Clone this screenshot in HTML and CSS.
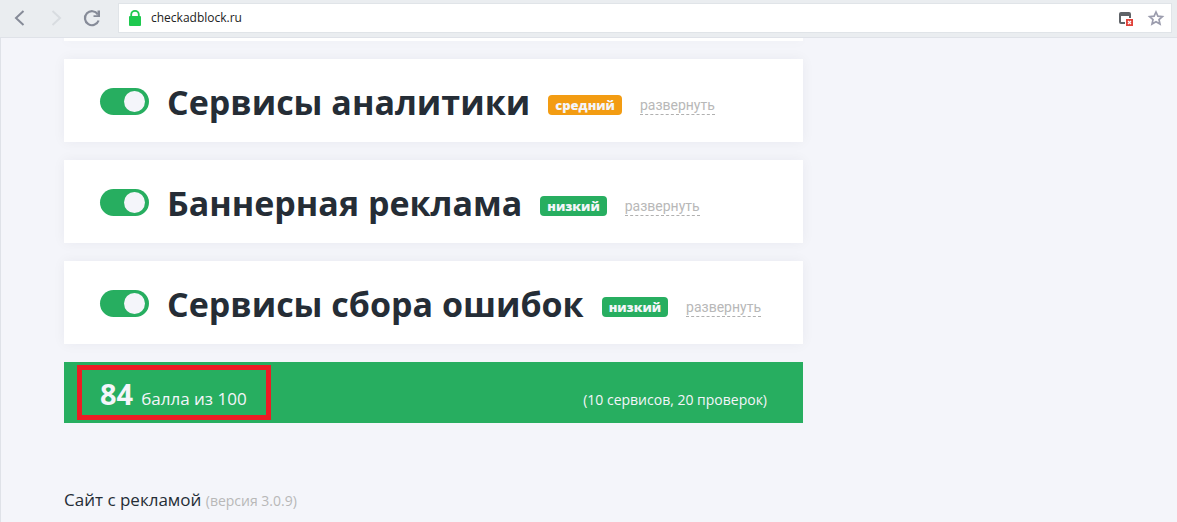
FILE: index.html
```html
<!DOCTYPE html>
<html lang="ru">
<head>
<meta charset="utf-8">
<meta name="viewport" content="width=device-width, initial-scale=1">
<title>checkadblock.ru</title>
<link rel="stylesheet" href="styles.css">
</head>
<body>
<header class="toolbar">
  <nav class="nav">
    <button class="icon-btn" type="button" aria-label="Назад">
      <svg width="20" height="20" viewBox="0 0 20 20"><path d="M13.500 3 6 10l7.500 7" fill="none" stroke="#868b98" stroke-width="2"/></svg>
    </button>
    <button class="icon-btn" type="button" aria-label="Вперёд" disabled>
      <svg width="20" height="20" viewBox="0 0 20 20"><path d="M6.500 3 14 10l-7.500 7" fill="none" stroke="#d8dce0" stroke-width="2"/></svg>
    </button>
    <button class="icon-btn" type="button" aria-label="Обновить">
      <svg width="20" height="20" viewBox="0 0 20 20"><path d="M15.800 6.300A7 7 0 1 0 16.600 12.500" fill="none" stroke="#868b98" stroke-width="2.200"/><path d="M18 2.500V9h-6.500V7.200h4V2.500z" fill="#868b98"/></svg>
    </button>
  </nav>
  <div class="address">
    <svg class="lock" width="14" height="18" viewBox="0 0 14 18"><path d="M3.200 8V5.600a3.800 3.800 0 0 1 7.600 0V8" fill="none" stroke="#1ec94f" stroke-width="1.800"/><rect x="1" y="7" width="12" height="10" rx="1" fill="#1ec94f"/></svg>
    <input class="url" type="text" value="checkadblock.ru" aria-label="Адрес">
    <div class="actions">
      <button class="icon-btn" type="button" aria-label="Окна заблокированы">
        <svg width="20" height="20" viewBox="0 0 20 20"><path d="M10 16H6a2 2 0 0 1-2-2V6a2 2 0 0 1 2-2h8a2 2 0 0 1 2 2v4h-2V8H6v6h4z" fill="#5f6368"/><rect x="11" y="11" width="7" height="7" fill="#e0433b"/><path d="m13 13 3 3m0-3-3 3" stroke="#fff" stroke-width="1.200"/></svg>
      </button>
      <button class="icon-btn" type="button" aria-label="В закладки">
        <svg width="20" height="20" viewBox="0 0 20 20"><path d="m10 4 1.900 4.100 4.500.5-3.400 3 1 4.500-4-2.300-4 2.300 1-4.500-3.400-3 4.500-.5z" fill="none" stroke="#9b9cad" stroke-width="1.700"/></svg>
      </button>
    </div>
  </div>
</header>
<main class="page">
  <div class="column">
    <div class="card card-tail"></div>
    <section class="card">
      <input class="switch" type="checkbox" id="s1" checked>
      <h2 class="title"><label for="s1">Сервисы аналитики</label></h2>
      <span class="badge badge-mid">средний</span>
      <a class="more" href="#analytics">развернуть</a>
    </section>
    <section class="card">
      <input class="switch" type="checkbox" id="s2" checked>
      <h2 class="title"><label for="s2">Баннерная реклама</label></h2>
      <span class="badge">низкий</span>
      <a class="more" href="#banners">развернуть</a>
    </section>
    <section class="card">
      <input class="switch" type="checkbox" id="s3" checked>
      <h2 class="title"><label for="s3">Сервисы сбора ошибок</label></h2>
      <span class="badge">низкий</span>
      <a class="more" href="#errors">развернуть</a>
    </section>
    <section class="score">
      <p class="points"><strong class="number">84</strong><span>балла из 100</span></p>
      <p class="checks">(10 сервисов, 20 проверок)</p>
    </section>
    <footer class="footer">Сайт с рекламой <span class="version">(версия 3.0.9)</span></footer>
  </div>
</main>
</body>
</html>
```
FILE: styles.css
```css
* { box-sizing: border-box; }

body {
  margin: 0;
  height: 100vh;
  display: flex;
  flex-direction: column;
  overflow: hidden;
  background: #f4f5fa;
  color: #252d36;
  font-family: "Segoe UI", "Open Sans", sans-serif;
}

.toolbar {
  display: flex;
  align-items: center;
  gap: 16px;
  padding: 3px 5px 4px 10px;
  background: #eaedf0;
  border-bottom: 1px solid #dfe2e8;
}

.nav { display: flex; gap: 16px; }

.icon-btn {
  display: flex;
  padding: 0;
  border: 0;
  background: none;
}

.address {
  flex: 1;
  display: flex;
  align-items: center;
  height: 30px;
  padding: 0 5px 0 9px;
  gap: 9px;
  background: #fff;
  border: 1px solid #e0e4e8;
}

.actions { display: flex; gap: 11px; }

.url {
  flex: 1;
  min-width: 0;
  padding: 0;
  border: 0;
  outline: 0;
  background: none;
  color: #222;
  font: 12px/20px "Segoe UI", "Open Sans", sans-serif;
}

.lock { flex: none; }

.page {
  flex: 1;
  min-height: 0;
  overflow: hidden;
  padding: 0 64px 0 63px;
  border-left: 1px solid #dfe2e8;
}

.column {
  display: flex;
  flex-direction: column;
  gap: 18px;
  max-width: 739px;
}

.card {
  display: flex;
  align-items: flex-end;
  padding: 17px 36px 15px;
  background: #fff;
  box-shadow: 0 0 12px rgba(37, 45, 54, 0.05);
}

.card-tail { padding: 3px 0 0; }

.switch {
  appearance: none;
  flex: none;
  align-self: center;
  width: 49px;
  height: 27px;
  margin: 0 18px 0 0;
  padding: 3px 4px 3px 3px;
  border-radius: 14px;
  background: #bbb;
}

.switch::before {
  content: "";
  display: block;
  width: 21px;
  height: 21px;
  border-radius: 50%;
  background: #f4f5fa;
}

.switch:checked { background: #27ae60; }
.switch:checked::before { margin-left: auto; }

.title {
  margin: 0 18px 0 0;
  padding-top: 2px;
  font-size: 34px;
  line-height: 49px;
  font-weight: 700;
  white-space: nowrap;
}

.badge {
  margin: 0 18px 12px 0;
  padding: 0 7px;
  border-radius: 4px;
  background: #27ae60;
  color: #f4f5fa;
  font-size: 13px;
  line-height: 20px;
  font-weight: 800;
}

.badge-mid { background: #f39c12; }

.more {
  margin-bottom: 12px;
  color: #b8b8b8;
  border-bottom: 1px dashed #b0b0b0;
  font: 14px/18px Roboto, sans-serif;
  text-decoration: none;
}

.score {
  display: flex;
  align-items: baseline;
  justify-content: space-between;
  padding: 11px 36px 9px;
  background: #27ae60;
  color: #f4f5fa;
}

.points, .checks { margin: 0; }

.points {
  position: relative;
  display: flex;
  align-items: baseline;
  gap: 8px;
  font-size: 17px;
  line-height: 20px;
}

/* Red frame drawn over the score */
.points::after {
  content: "";
  position: absolute;
  inset: -8px -24px -6px -23px;
  border: 5px solid #ed1c24;
}

.number { font-size: 29px; line-height: 41px; }

.checks { font-size: 14px; line-height: 20px; }

.footer {
  margin-top: 47px;
  font-size: 17px;
  line-height: 24px;
}

.version { color: #b8b8b8; font-size: 14px; }
```
